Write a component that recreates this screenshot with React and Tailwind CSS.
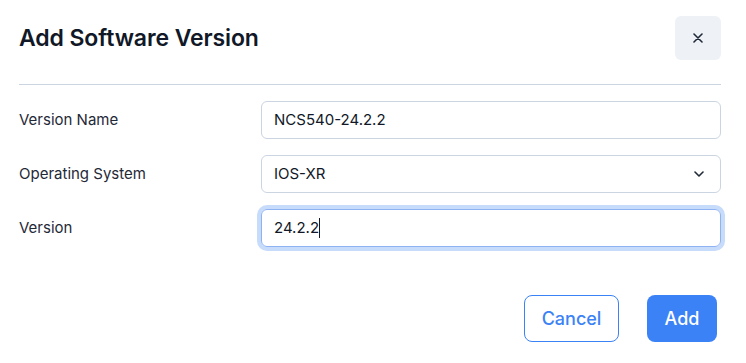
export default function App() {
  return (
    <div className="w-[746px] h-[363px] bg-white pl-[19px] pr-[25px] pt-4 font-['Inter',sans-serif] text-[#111827]">
      <div className="flex items-center justify-between pb-6 border-b border-[#cbd5e1]">
        <h1 className="text-[23px] font-semibold tracking-[-0.1px] text-[#111827]">Add Software Version</h1>
        <button className="w-[46px] h-[44px] rounded-md bg-[#eef2f6] flex items-center justify-center">
          <svg width="10" height="10" viewBox="0 0 10 10" fill="none" stroke="#1f2937" strokeWidth="1.6" strokeLinecap="round">
            <path d="M1 1L9 9M9 1L1 9" />
          </svg>
        </button>
      </div>
      <div className="pt-4 flex flex-col gap-4">
        <div className="grid grid-cols-[242px_1fr] items-center">
          <label className="text-[15px] text-[#1f2937]">Version Name</label>
          <div className="h-[38px] rounded-md border border-[#cbd5e1] px-3 flex items-center text-[15px] text-[#111827]">NCS540-24.2.2</div>
        </div>
        <div className="grid grid-cols-[242px_1fr] items-center">
          <label className="text-[15px] text-[#1f2937]">Operating System</label>
          <div className="h-[38px] rounded-md border border-[#cbd5e1] pl-3 pr-4 flex items-center justify-between text-[15px] text-[#111827]">
            <span>IOS-XR</span>
            <svg width="10" height="6" viewBox="0 0 10 6" fill="none" stroke="#1f2937" strokeWidth="1.6" strokeLinecap="round" strokeLinejoin="round">
              <path d="M1 1L5 5L9 1" />
            </svg>
          </div>
        </div>
        <div className="grid grid-cols-[242px_1fr] items-center">
          <label className="text-[15px] text-[#1f2937]">Version</label>
          <div className="h-[38px] rounded-md border border-[#8fb3f2] ring-4 ring-[#c7dbfb] px-3 flex items-center text-[15px] text-[#111827]">
            <span>24.2.2</span>
            <span className="w-px h-[20px] bg-[#111827]"></span>
          </div>
        </div>
      </div>
      <div className="flex justify-end gap-7 pt-12 pr-1">
        <button className="w-[95px] h-[47px] rounded-lg border border-[#3b82f6] text-[#3b82f6] text-[18px] font-medium">Cancel</button>
        <button className="w-[70px] h-[47px] rounded-lg bg-[#3b82f6] text-white text-[18px] font-medium">Add</button>
      </div>
    </div>
  );
}
